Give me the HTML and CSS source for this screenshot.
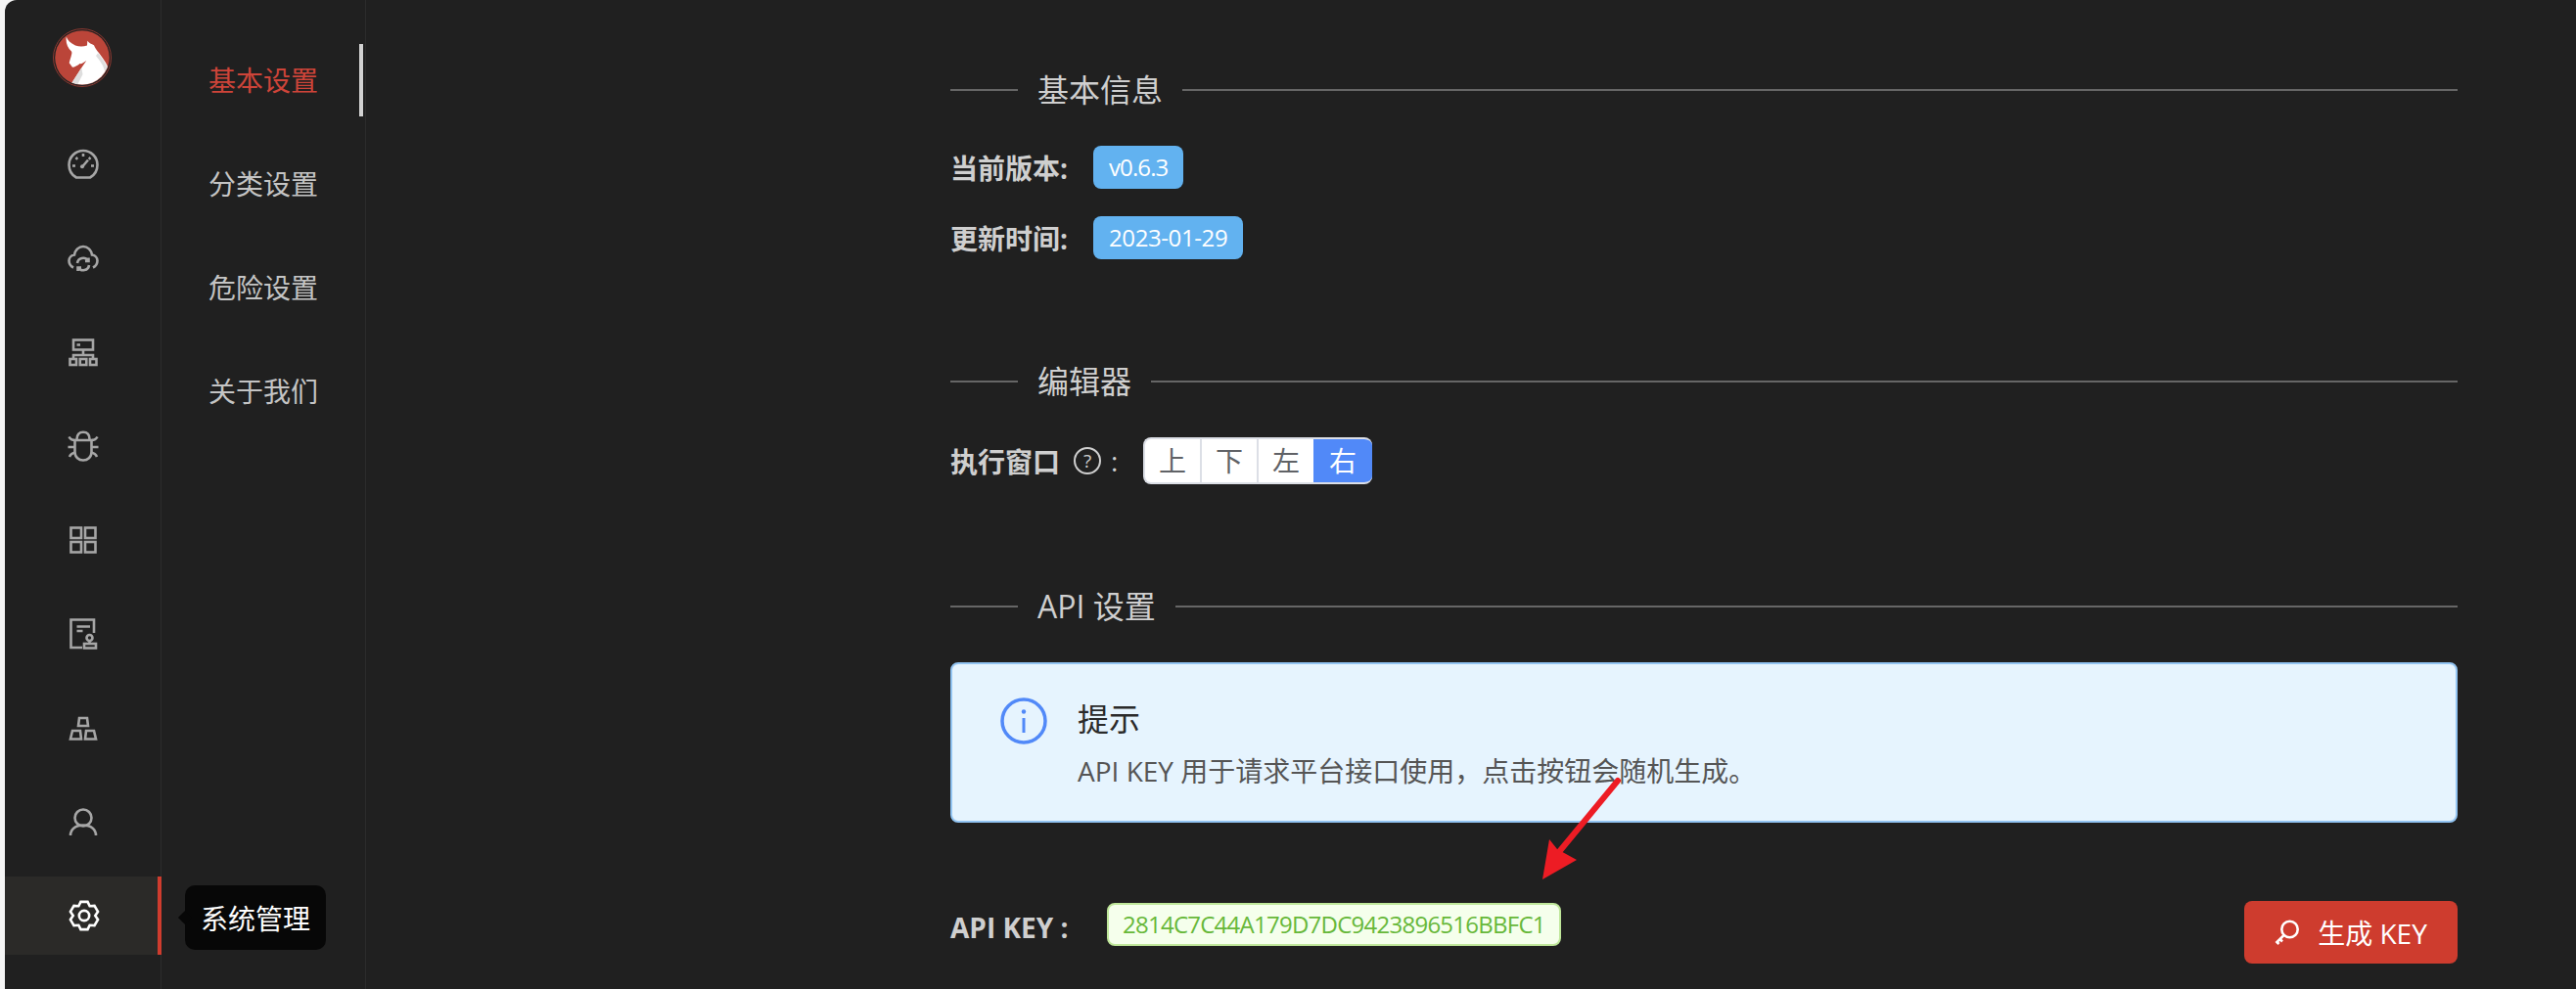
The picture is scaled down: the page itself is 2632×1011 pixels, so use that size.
FILE: index.html
```html
<!DOCTYPE html>
<html lang="zh-CN">
<head>
<meta charset="utf-8">
<title>系统管理</title>
<link rel="stylesheet" href="styles.css">
</head>
<body>
<div class="app">
  <nav class="rail">
    <div class="logo">
      <svg width="60" height="60" viewBox="0 0 60 60">
        <defs><clipPath id="logoclip"><circle cx="30" cy="30" r="27.5"/></clipPath></defs>
        <circle cx="30" cy="30" r="29.5" fill="none" stroke="#8f3a32" stroke-width="1"/>
        <circle cx="30" cy="30" r="27.8" fill="#bb4539"/>
        <g clip-path="url(#logoclip)">
          <path fill="#fff" d="M13.700 8.500C15 12 18 15 23 17.500C27 18.800 31 18.800 35 17.500L35.300 12.700C37 15 39.500 16 42 17.200C43 20 45 22.500 47 25C51 30 55 36 56.500 40L58 47L50 60L18 60L19 56.300L29.300 40.300L34.300 33C31 35.500 29 36.500 27.700 36C25 38 22.500 39.700 20 39.700L16.700 35.300C17.500 32 18.500 29.500 19 27C19.500 25.500 19.500 24.500 19 23.500C15 20 13 15 13.700 8.500Z"/>
          <path fill="#dedede" d="M19 56.300L29.300 40.300L30.500 47L25 58Z"/>
          <path fill="#dedede" d="M44 28C48 33 52 38 53 44L55.500 40C54 36 50 30 46 25.300Z"/>
        </g>
      </svg>
    </div>
    <a class="rail-item">
      <svg class="ico" viewBox="0 0 32 32"><path d="M9 29.500C4.500 27 1.500 22 1.500 16.500A14.500 14.500 0 0 1 30.500 16.500C30.500 22 27.500 27 23 29.500Z"/><path d="M5 17.500H8M24 17.500H27M16 5V8M8.500 9L10.200 10.800M23.500 9L21.800 10.800M15.500 18L21 11.500"/><circle class="dot" cx="15" cy="18.300" r="2"/></svg>
    </a>
    <a class="rail-item">
      <svg class="ico" viewBox="0 0 32 32"><path d="M6 25.500C3 24 1.500 21.500 1.500 18.500C1.500 15.500 3.800 13 7 12.500C7.800 7.500 11.500 4 16 4C20.500 4 24.200 7.500 25 12.500C28.200 13 30.500 15.500 30.500 18.500C30.500 21.500 29 24 26 25.500"/><path d="M10 21A6 6 0 0 1 21 18.500M22 23A6 6 0 0 1 11 25.500M21.500 15.500V19H18M10.500 29V25.500H14"/></svg>
    </a>
    <a class="rail-item">
      <svg class="ico" viewBox="0 0 32 32"><rect x="6" y="3.500" width="20" height="10"/><path d="M9.500 8.500H13M16 13.500V19M6 22V19H26V22"/><rect x="2.500" y="23" width="6.500" height="6"/><rect x="12.800" y="23" width="6.500" height="6"/><rect x="23" y="23" width="6.500" height="6"/></svg>
    </a>
    <a class="rail-item">
      <svg class="ico" viewBox="0 0 32 32"><path d="M9.500 9C9.500 4.500 12 1.800 16 1.800C20 1.800 22.500 4.500 22.500 9"/><path d="M7.500 10H24.500V22C24.500 27.500 20.500 30.500 16 30.500C11.500 30.500 7.500 27.500 7.500 22Z"/><path d="M1.500 6.500C2.500 8.500 4.500 10 7.500 10M30.500 6.500C29.500 8.500 27.500 10 24.500 10M.5 17H7.500M24.500 17H31.500M2 27C3 24.500 5 23 8 22.500M30 27C29 24.500 27 23 24 22.500"/></svg>
    </a>
    <a class="rail-item">
      <svg class="ico" viewBox="0 0 32 32"><rect x="3.500" y="3.500" width="10.500" height="10.500"/><rect x="18" y="3.500" width="10.500" height="10.500"/><rect x="3.500" y="18" width="10.500" height="10.500"/><rect x="18" y="18" width="10.500" height="10.500"/></svg>
    </a>
    <a class="rail-item">
      <svg class="ico" viewBox="0 0 32 32"><path d="M27 15V1.500H3.500V30H15M9.500 8.500H23M9.500 13H15.500"/><circle cx="22.500" cy="20" r="3"/><path d="M22.500 23V26"/><rect x="17" y="26" width="12" height="4.500"/></svg>
    </a>
    <a class="rail-item">
      <svg class="ico" viewBox="0 0 32 32"><path d="M12 6H20L21 14H11Z"/><path d="M5 19H13L14 27.500H3Z"/><path d="M19 19H27L29 27.500H18Z"/></svg>
    </a>
    <a class="rail-item">
      <svg class="ico" viewBox="0 0 32 32"><circle cx="16" cy="12" r="8.500"/><path d="M3 30C3 24 8 19.500 16 19.500C24 19.500 29 24 29 30"/></svg>
    </a>
    <a class="rail-item is-active">
      <svg class="ico" viewBox="-1 -1 34 34"><path d="M12.250 .96H19.750L22 5.600L27.150 5.230L30.900 11.700L28 16L30.900 20.300L27.150 26.770L22 26.400L19.750 31.040H12.250L10 26.400L4.850 26.770L1.100 20.300L4 16L1.100 11.700L4.850 5.230L10 5.600Z"/><circle cx="16" cy="16" r="5.500"/></svg>
    </a>
    <div class="tooltip">系统管理</div>
  </nav>

  <aside class="submenu">
    <a class="sub-item is-active">基本设置</a>
    <a class="sub-item">分类设置</a>
    <a class="sub-item">危险设置</a>
    <a class="sub-item">关于我们</a>
  </aside>

  <main class="main">
    <div class="divider first"><span class="divider-text">基本信息</span></div>
    <div class="info-row first-row">
      <span class="label">当前版本:</span><span class="tag tag-version">v0.6.3</span>
    </div>
    <div class="info-row second-row">
      <span class="label">更新时间:</span><span class="tag">2023-01-29</span>
    </div>

    <div class="divider"><span class="divider-text">编辑器</span></div>
    <div class="editor-row">
      <span class="label-plain">执行窗口</span>
      <span class="help">?</span>
      <span class="colon">:</span>
      <div class="segmented">
        <span class="seg">上</span><span class="seg">下</span><span class="seg">左</span><span class="seg seg-on">右</span>
      </div>
    </div>

    <div class="divider"><span class="divider-text">API 设置</span></div>
    <div class="alert">
      <svg class="alert-icon" viewBox="0 0 48 48"><circle cx="24" cy="24" r="22" fill="none" stroke="#5189f8" stroke-width="3.500"/><circle cx="24" cy="14.500" r="2.200" fill="#5189f8"/><path d="M24 21V36" stroke="#5189f8" stroke-width="3"/></svg>
      <div class="alert-body">
        <div class="alert-title">提示</div>
        <div class="alert-desc">API KEY 用于请求平台接口使用&#xFF0C;点击按钮会随机生成。</div>
      </div>
    </div>

    <div class="key-row">
      <span class="key-label">API KEY :</span>
      <span class="key-value">2814C7C44A179D7DC9423896516BBFC1</span>
      <button class="key-btn">
        <svg class="key-ico" viewBox="0 0 26 26"><circle cx="15.500" cy="10" r="8.200"/><path d="M9.700 15.800L1.500 24M5.500 20L8 22.500M2.500 23L4.500 25"/></svg>
        <span>生成 KEY</span>
      </button>
    </div>

    <svg class="arrow" width="90" height="112" viewBox="0 0 90 112">
      <path d="M80 5L19 79" fill="none" stroke="#ed1c24" stroke-width="6" stroke-linecap="round"/>
      <path d="M3 106L10 65L18 75L38 86Z" fill="#ed1c24"/>
    </svg>
  </main>
</div>
</body>
</html>
```

FILE: styles.css
```css
* { box-sizing: border-box; }
html, body { margin: 0; height: 100%; }
body {
  background: #f5f5f5;
  font-family: "Open Sans", "Noto Sans CJK SC", sans-serif;
  overflow: hidden;
}
.app {
  display: flex;
  height: 1011px;
  margin-left: 5px;
  background: #202020;
  border-top-left-radius: 12px;
  overflow: hidden;
  color: #cfcfcf;
}

/* icon rail */
.rail {
  position: relative;
  width: 160px;
  flex: none;
  border-right: 1px solid #2c2c2c;
}
.logo {
  height: 128px;
  padding: 29px 0 0 49px;
}
.logo svg { display: block; }
.rail-item {
  display: flex;
  align-items: center;
  justify-content: center;
  height: 80px;
  margin-bottom: 16px;
}
.ico {
  width: 32px;
  height: 32px;
  fill: none;
  stroke: #a6a6a6;
  stroke-width: 2.600;
}
.ico .dot { fill: #a6a6a6; stroke: none; }
.rail-item.is-active {
  background: #2b2a28;
  border-right: 4px solid #cf3c2e;
  margin-right: -1px;
  padding-left: 5px;
}
.is-active .ico { stroke: #fff; stroke-width: 2.800; }
.tooltip {
  position: absolute;
  left: 184px;
  top: 905px;
  width: 144px;
  height: 66px;
  display: flex;
  align-items: center;
  justify-content: center;
  background: #070707;
  border-radius: 10px;
  color: #fff;
  font-size: 28px;
  z-index: 5;
}
.tooltip::before {
  content: "";
  position: absolute;
  left: -5px;
  top: 28px;
  width: 10px;
  height: 10px;
  background: #070707;
  transform: rotate(45deg);
}

/* secondary menu */
.submenu {
  width: 209px;
  flex: none;
  padding-top: 45px;
  border-right: 1px solid #2c2c2c;
}
.sub-item {
  position: relative;
  display: block;
  height: 74px;
  margin-bottom: 32px;
  padding-left: 48px;
  line-height: 74px;
  font-size: 28px;
  color: #c4c4c4;
}
.sub-item.is-active { color: #ce4439; }
.sub-item.is-active::after {
  content: "";
  position: absolute;
  right: 2px;
  top: 0;
  width: 4px;
  height: 74px;
  background: #d2d2d2;
}

/* main */
.main {
  position: relative;
  flex: 1;
  padding: 0 121px 0 597px;
}
.divider {
  display: flex;
  align-items: center;
  height: 44px;
  margin-top: 103px;
}
.divider.first { margin-top: 70px; }
.divider::before {
  content: "";
  width: 69px;
  height: 2px;
  background: #666;
}
.divider::after {
  content: "";
  flex: 1;
  height: 2px;
  background: #666;
}
.divider-text {
  padding: 0 20px;
  font-size: 32px;
  line-height: 44px;
  color: #cfcfcf;
}
.info-row {
  display: flex;
  align-items: center;
  height: 44px;
}
.first-row { margin-top: 35px; }
.second-row { margin-top: 28px; }
.label {
  width: 146px;
  font-size: 28px;
  font-weight: 700;
  color: #cfcfcf;
}
.tag {
  height: 44px;
  padding: 0 16px;
  line-height: 44px;
  background: #62b2f0;
  border-radius: 8px;
  color: #fff;
  font-size: 24px;
  letter-spacing: -.4px;
}
.tag-version { letter-spacing: -.9px; }
.editor-row {
  display: flex;
  align-items: center;
  height: 48px;
  margin-top: 35px;
}
.label-plain {
  font-size: 28px;
  font-weight: 700;
  color: #cfcfcf;
}
.help {
  width: 28px;
  height: 28px;
  margin-left: 14px;
  border: 2px solid #cfcfcf;
  border-radius: 50%;
  font-size: 19px;
  line-height: 24px;
  text-align: center;
  color: #cfcfcf;
}
.colon {
  margin-left: 10px;
  width: 33px;
  font-size: 28px;
  line-height: 28px;
  color: #cfcfcf;
}
.segmented {
  display: flex;
  height: 48px;
  border-radius: 8px;
  overflow: hidden;
  background: #fff;
  border: 2px solid #dcdfe6;
  border-right: 0;
}
.seg {
  width: 58px;
  line-height: 44px;
  text-align: center;
  font-size: 28px;
  color: #606266;
  border-right: 2px solid #dcdfe6;
}
.seg-on {
  width: 60px;
  margin: -2px 0 -2px -2px;
  line-height: 48px;
  background: #5189f8;
  color: #fff;
  border-right: 0;
}
.alert {
  display: flex;
  height: 164px;
  margin-top: 35px;
  padding: 34px 0 0 49px;
  background: #e6f4fe;
  border: 2px solid #92c4f2;
  border-radius: 8px;
  color: #333;
}
.alert-icon {
  width: 48px;
  height: 48px;
  flex: none;
}
.alert-body { margin-left: 31px; }
.alert-title {
  font-size: 32px;
  line-height: 44px;
  color: #2a2a2a;
}
.alert-desc {
  margin-top: 9px;
  font-size: 28px;
  line-height: 44px;
  color: #555;
}
.key-row {
  display: flex;
  align-items: flex-start;
  height: 64px;
  margin-top: 80px;
}
.key-label {
  width: 160px;
  margin-top: 3px;
  font-size: 28px;
  line-height: 48px;
  font-weight: 700;
  color: #cfcfcf;
}
.key-value {
  height: 44px;
  margin-top: 2px;
  padding: 0 14px;
  line-height: 40px;
  background: #f5ffec;
  border: 2px solid #bfe79a;
  border-radius: 8px;
  color: #67b83a;
  font-size: 24px;
  letter-spacing: -.75px;
}
.key-btn {
  display: flex;
  align-items: center;
  justify-content: center;
  gap: 18px;
  width: 218px;
  height: 64px;
  margin-left: auto;
  background: #ce3c2e;
  border: 0;
  border-radius: 8px;
  color: #fff;
  font-family: inherit;
  font-size: 28px;
}
.key-ico {
  width: 26px;
  height: 26px;
  fill: none;
  stroke: #fff;
  stroke-width: 2.600;
}
.arrow {
  position: absolute;
  left: 1199px;
  top: 793px;
}
```
